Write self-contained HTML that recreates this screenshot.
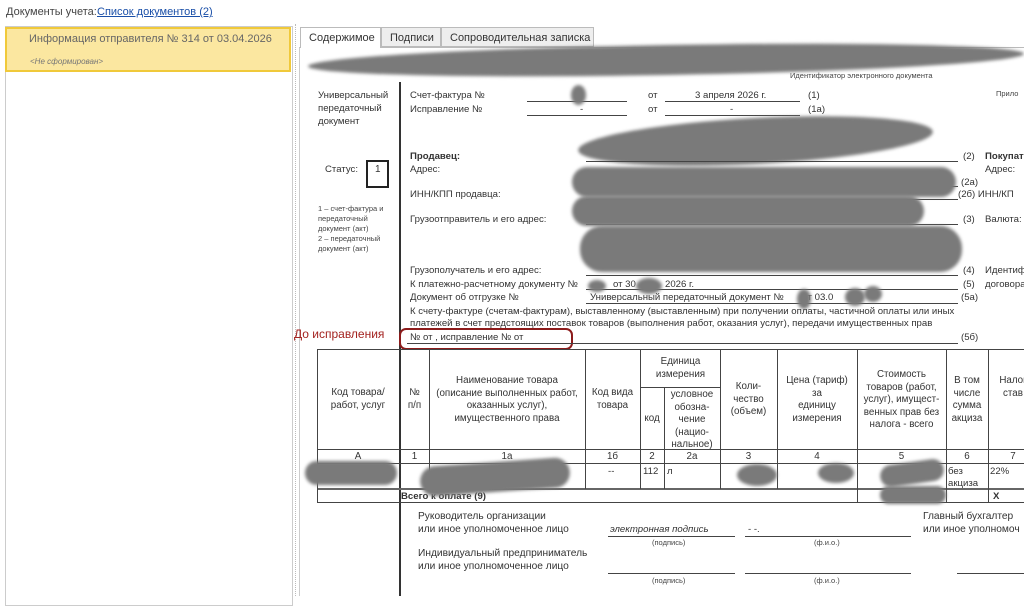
<!DOCTYPE html>
<html><head><meta charset="utf-8">
<style>
*{margin:0;padding:0;box-sizing:border-box}
body{width:1024px;height:596px;overflow:hidden;background:#fff;font-family:"Liberation Sans","Noto Sans CJK SC",sans-serif;color:#333;position:relative}
.a{position:absolute;white-space:nowrap}
.f{font-size:9.6px;color:#333}
.s{font-size:7.5px;color:#444}
.ln{position:absolute;height:1px;background:#444}
.b{position:absolute;background:#7a7a7a;border-radius:50%;filter:blur(1.5px)}
.v{position:absolute;width:1px;background:#444}
.h{position:absolute;height:1px;background:#444}
.c{position:absolute;font-size:9.8px;color:#333;text-align:center;line-height:12.5px}
</style></head><body>
<div class="a" style="left:6px;top:6px;font-size:11px;color:#444">Документы учета:</div>
<div class="a" style="left:97px;top:6px;font-size:11px;color:#1a4fa8;text-decoration:underline">Список документов (2)</div>
<div class="a" style="left:5px;top:26px;width:288px;height:580px;border:1px solid #ccc"></div>
<div class="a" style="left:5px;top:27px;width:286px;height:45px;background:#fbe7a0;border:2px solid #f0c93a"></div>
<div class="a" style="left:29px;top:33px;font-size:11px;color:#666">Информация отправителя № 314 от 03.04.2026</div>
<div class="a" style="left:30px;top:57px;font-size:8px;color:#777;font-style:italic">&lt;Не сформирован&gt;</div>
<div class="a" style="left:295px;top:24px;width:0;height:572px;border-left:1px dotted #bbb"></div>
<div class="a" style="left:299px;top:47px;width:725px;height:549px;border-left:1px solid #ccc;border-top:1px solid #bbb"></div>
<div class="a" style="left:300px;top:27px;width:81px;height:21px;background:#fff;border:1px solid #bbb;border-bottom:none;font-size:11px;color:#333;padding:4px 0 0 8px">Содержимое</div>
<div class="a" style="left:381px;top:27px;width:60px;height:20px;background:#eee;border:1px solid #bbb;font-size:11px;color:#333;padding:4px 0 0 8px">Подписи</div>
<div class="a" style="left:441px;top:27px;width:153px;height:20px;background:#eee;border:1px solid #bbb;font-size:11px;color:#333;padding:4px 0 0 8px">Сопроводительная записка</div>
<div class="a s" style="left:790px;top:71px">Идентификатор электронного документа</div>
<div class="b" style="left:308px;top:45px;width:716px;height:30px;transform:rotate(-1deg)"></div>
<div class="v" style="left:399px;top:82px;height:514px;width:2px;background:#333"></div>
<div class="a f" style="left:318px;top:89px;line-height:13px">Универсальный<br>передаточный<br>документ</div>
<div class="a f" style="left:410px;top:90px">Счет-фактура №</div>
<div class="ln" style="left:527px;top:101px;width:100px"></div>
<div class="a f" style="left:648px;top:90px">от</div>
<div class="ln" style="left:665px;top:101px;width:135px"></div>
<div class="a f" style="left:695px;top:90px">3 апреля 2026 г.</div>
<div class="a f" style="left:808px;top:90px">(1)</div>
<div class="b" style="left:571px;top:85px;width:15px;height:20px"></div>
<div class="a f" style="left:410px;top:104px">Исправление №</div>
<div class="ln" style="left:527px;top:115px;width:100px"></div>
<div class="a f" style="left:580px;top:104px">-</div>
<div class="a f" style="left:648px;top:104px">от</div>
<div class="ln" style="left:665px;top:115px;width:135px"></div>
<div class="a f" style="left:730px;top:104px">-</div>
<div class="a f" style="left:808px;top:104px">(1а)</div>
<div class="a s" style="left:996px;top:89px">Прило</div>
<div class="b" style="left:578px;top:118px;width:355px;height:46px;transform:rotate(-3deg)"></div>
<div class="a f" style="left:325px;top:164px">Статус:</div>
<div class="a" style="left:366px;top:160px;width:23px;height:28px;border:2px solid #222;font-size:10px;padding:2px 0 0 7px">1</div>
<div class="a s" style="left:318px;top:204px;line-height:10px">1 – счет-фактура и<br>передаточный<br>документ (акт)<br>2 – передаточный<br>документ (акт)</div>
<div class="a f" style="left:410px;top:151px;font-weight:bold">Продавец:</div>
<div class="ln" style="left:586px;top:161px;width:372px"></div>
<div class="a f" style="left:963px;top:151px">(2)</div>
<div class="a f" style="left:985px;top:151px;font-weight:bold">Покупат</div>
<div class="a f" style="left:410px;top:164px">Адрес:</div>
<div class="a f" style="left:985px;top:164px">Адрес:</div>
<div class="ln" style="left:586px;top:186px;width:372px"></div>
<div class="a f" style="left:961px;top:177px">(2а)</div>
<div class="a f" style="left:410px;top:189px">ИНН/КПП продавца:</div>
<div class="ln" style="left:586px;top:199px;width:372px"></div>
<div class="a f" style="left:958px;top:189px">(2б) ИНН/КП</div>
<div class="a f" style="left:410px;top:214px">Грузоотправитель и его адрес:</div>
<div class="ln" style="left:586px;top:224px;width:372px"></div>
<div class="a f" style="left:963px;top:214px">(3)</div>
<div class="a f" style="left:985px;top:214px">Валюта:</div>
<div class="b" style="left:572px;top:167px;width:384px;height:30px;border-radius:16px"></div>
<div class="b" style="left:572px;top:196px;width:352px;height:30px;border-radius:16px"></div>
<div class="b" style="left:580px;top:226px;width:382px;height:46px;border-radius:22px"></div>
<div class="a f" style="left:410px;top:265px">Грузополучатель и его адрес:</div>
<div class="ln" style="left:586px;top:275px;width:372px"></div>
<div class="a f" style="left:963px;top:265px">(4)</div>
<div class="a f" style="left:985px;top:265px">Идентиф</div>
<div class="a f" style="left:410px;top:279px">К платежно-расчетному документу №</div>
<div class="a f" style="left:613px;top:279px">от 30</div>
<div class="a f" style="left:665px;top:279px">2026 г.</div>
<div class="ln" style="left:586px;top:289px;width:372px"></div>
<div class="a f" style="left:963px;top:279px">(5)</div>
<div class="a f" style="left:985px;top:279px">договора</div>
<div class="b" style="left:588px;top:280px;width:18px;height:12px"></div>
<div class="b" style="left:636px;top:278px;width:26px;height:16px"></div>
<div class="a f" style="left:410px;top:292px">Документ об отгрузке №</div>
<div class="a f" style="left:590px;top:292px">Универсальный передаточный документ №&nbsp;&nbsp;&nbsp;&nbsp;&nbsp;&nbsp;&nbsp;от 03.0</div>
<div class="ln" style="left:586px;top:303px;width:372px"></div>
<div class="a f" style="left:961px;top:292px">(5а)</div>
<div class="b" style="left:797px;top:289px;width:14px;height:20px"></div>
<div class="b" style="left:845px;top:288px;width:20px;height:18px"></div>
<div class="b" style="left:864px;top:286px;width:18px;height:16px"></div>
<div class="a f" style="left:410px;top:306px">К счету-фактуре (счетам-фактурам), выставленному (выставленным) при получении оплаты, частичной оплаты или иных</div>
<div class="a f" style="left:410px;top:318px">платежей в счет предстоящих поставок товаров (выполнения работ, оказания услуг), передачи имущественных прав</div>
<div class="a" style="left:294px;top:327px;font-size:12px;color:#a3221f">До исправления</div>
<div class="a" style="left:399px;top:328px;width:174px;height:22px;border:2px solid #8c1b1b;border-radius:7px"></div>
<div class="a f" style="left:410px;top:332px">№ от , исправление № от</div>
<div class="ln" style="left:407px;top:343px;width:551px"></div>
<div class="a f" style="left:961px;top:332px">(5б)</div>
<!-- table -->
<div class="h" style="left:317px;top:349px;width:707px"></div>
<div class="h" style="left:640px;top:387px;width:81px"></div>
<div class="h" style="left:317px;top:449px;width:707px"></div>
<div class="h" style="left:317px;top:463px;width:707px"></div>
<div class="h" style="left:317px;top:488px;width:707px;height:2px;background:#666"></div>
<div class="h" style="left:317px;top:502px;width:707px"></div>
<div class="v" style="left:317px;top:349px;height:154px"></div>
<div class="v" style="left:429px;top:349px;height:140px"></div>
<div class="v" style="left:585px;top:349px;height:140px"></div>
<div class="v" style="left:640px;top:349px;height:140px"></div>
<div class="v" style="left:664px;top:387px;height:102px"></div>
<div class="v" style="left:720px;top:349px;height:140px"></div>
<div class="v" style="left:777px;top:349px;height:140px"></div>
<div class="v" style="left:857px;top:349px;height:154px"></div>
<div class="v" style="left:946px;top:349px;height:154px"></div>
<div class="v" style="left:988px;top:349px;height:154px"></div>
<div class="c" style="left:317px;top:387px;width:82px">Код товара/<br>работ, услуг</div>
<div class="c" style="left:400px;top:387px;width:29px">№<br>п/п</div>
<div class="c" style="left:429px;top:375px;width:156px">Наименование товара<br>(описание выполненных работ,<br>оказанных услуг),<br>имущественного права</div>
<div class="c" style="left:585px;top:387px;width:55px">Код вида<br>товара</div>
<div class="c" style="left:640px;top:356px;width:81px">Единица<br>измерения</div>
<div class="c" style="left:640px;top:413px;width:24px">код</div>
<div class="c" style="left:664px;top:389px;width:56px">условное<br>обозна-<br>чение<br>(нацио-<br>нальное)</div>
<div class="c" style="left:720px;top:381px;width:57px">Коли-<br>чество<br>(объем)</div>
<div class="c" style="left:777px;top:375px;width:80px">Цена (тариф)<br>за<br>единицу<br>измерения</div>
<div class="c" style="left:857px;top:369px;width:89px">Стоимость<br>товаров (работ,<br>услуг), имущест-<br>венных прав без<br>налога - всего</div>
<div class="c" style="left:946px;top:375px;width:42px">В том<br>числе<br>сумма<br>акциза</div>
<div class="c" style="left:988px;top:375px;width:50px">Налог<br>став</div>
<div class="c" style="left:317px;top:451px;width:82px">А</div>
<div class="c" style="left:400px;top:451px;width:29px">1</div>
<div class="c" style="left:429px;top:451px;width:156px">1а</div>
<div class="c" style="left:585px;top:451px;width:55px">1б</div>
<div class="c" style="left:640px;top:451px;width:24px">2</div>
<div class="c" style="left:664px;top:451px;width:56px">2а</div>
<div class="c" style="left:720px;top:451px;width:57px">3</div>
<div class="c" style="left:777px;top:451px;width:80px">4</div>
<div class="c" style="left:857px;top:451px;width:89px">5</div>
<div class="c" style="left:946px;top:451px;width:42px">6</div>
<div class="c" style="left:988px;top:451px;width:50px">7</div>
<div class="a f" style="left:608px;top:466px">--</div>
<div class="a f" style="left:643px;top:466px">112</div>
<div class="a f" style="left:667px;top:466px">л</div>
<div class="a f" style="left:948px;top:466px;line-height:12px">без<br>акциза</div>
<div class="a f" style="left:990px;top:466px">22%</div>
<div class="a f" style="left:401px;top:491px;font-weight:bold">Всего к оплате (9)</div>
<div class="a f" style="left:993px;top:491px;font-weight:bold">Х</div>
<div class="b" style="left:305px;top:461px;width:92px;height:24px;border-radius:12px"></div>
<div class="b" style="left:420px;top:462px;width:150px;height:30px;border-radius:15px;transform:rotate(-4deg)"></div>
<div class="b" style="left:737px;top:464px;width:40px;height:22px"></div>
<div class="b" style="left:818px;top:463px;width:36px;height:20px"></div>
<div class="b" style="left:880px;top:462px;width:64px;height:22px;border-radius:11px;transform:rotate(-8deg)"></div>
<div class="b" style="left:880px;top:486px;width:66px;height:18px;border-radius:10px"></div>
<div class="a f" style="left:418px;top:511px;font-size:10.2px">Руководитель организации</div>
<div class="a f" style="left:418px;top:524px;font-size:10.2px">или иное уполномоченное лицо</div>
<div class="a f" style="left:610px;top:524px;font-style:italic">электронная подпись</div>
<div class="ln" style="left:608px;top:536px;width:127px"></div>
<div class="a f" style="left:748px;top:524px">- -.</div>
<div class="ln" style="left:745px;top:536px;width:166px"></div>
<div class="a s" style="left:652px;top:538px">(подпись)</div>
<div class="a s" style="left:814px;top:538px">(ф.и.о.)</div>
<div class="a f" style="left:923px;top:511px;font-size:10.2px">Главный бухгалтер</div>
<div class="a f" style="left:923px;top:524px;font-size:10.2px">или иное уполномоч</div>
<div class="a f" style="left:418px;top:548px;font-size:10.2px">Индивидуальный предприниматель</div>
<div class="a f" style="left:418px;top:561px;font-size:10.2px">или иное уполномоченное лицо</div>
<div class="ln" style="left:608px;top:573px;width:127px"></div>
<div class="ln" style="left:745px;top:573px;width:166px"></div>
<div class="ln" style="left:957px;top:573px;width:67px"></div>
<div class="a s" style="left:652px;top:576px">(подпись)</div>
<div class="a s" style="left:814px;top:576px">(ф.и.о.)</div>
</body></html>
